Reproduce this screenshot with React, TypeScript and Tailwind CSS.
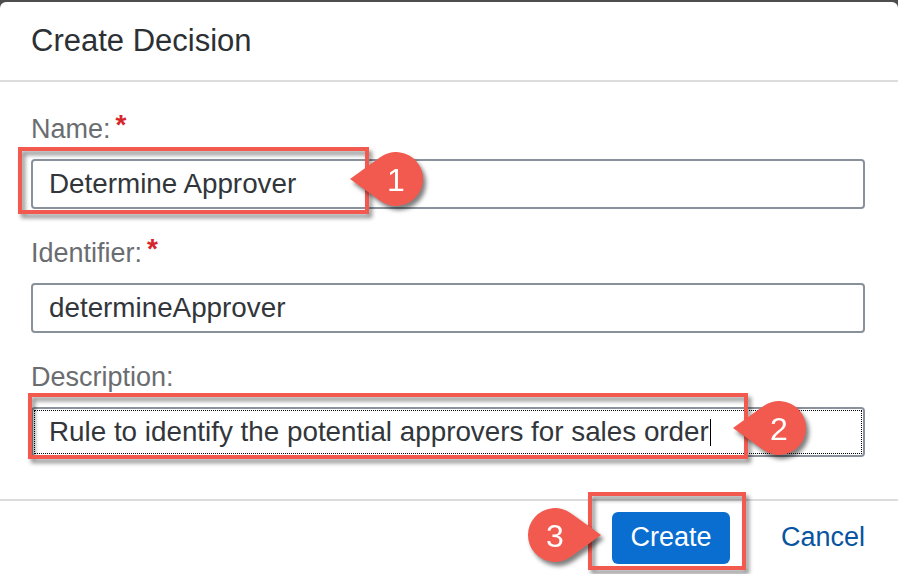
import React from "react";

const FONT = "font-['Liberation_Sans',Arial,sans-serif]";

interface FieldProps {
  label: string;
  required?: boolean;
  children: React.ReactNode;
  last?: boolean;
}

function Field({ label, required, children, last }: FieldProps) {
  return (
    <div className={last ? "" : "mb-[28px]"}>
      <div className="flex h-[32px] items-center text-[27px] text-[#6a6d70]">
        {label}
        {required && <span className="ml-[5px] -mt-[8px] text-[28px] font-bold text-[#d5262c]">*</span>}
      </div>
      <div className="mt-[14px]">{children}</div>
    </div>
  );
}

function TextInput({ value, focused }: { value: string; focused?: boolean }) {
  return (
    <div className="h-[50px] rounded-[4px] border-2 border-[#89919a] bg-white p-[1px]">
      <div
        className={`flex h-full items-center px-[14px] text-[27.8px] text-[#32363a] ${
          focused ? "border border-dotted border-black" : "border border-transparent"
        }`}
      >
        <span className="whitespace-nowrap">{value}</span>
        {focused && <span className="ml-[1px] h-[27px] w-[1.5px] bg-black" />}
      </div>
    </div>
  );
}

// annotation frame drawn over the dialog
function Highlight({ className }: { className: string }) {
  return (
    <div
      className={`absolute border-4 border-[#f25a4f] drop-shadow-[3px_4px_2px_rgba(0,0,0,0.45)] ${className}`}
    />
  );
}

interface CalloutProps {
  n: number;
  className: string;
  flip?: boolean;
}

function Callout({ n, className, flip }: CalloutProps) {
  const cx = flip ? 30 : 50;
  return (
    <svg
      width="80"
      height="70"
      viewBox="0 0 80 70"
      className={`absolute overflow-visible drop-shadow-[3px_4px_2px_rgba(0,0,0,0.5)] ${className}`}
    >
      <g transform={flip ? "translate(80,0) scale(-1,1)" : undefined}>
        <path d="M4 35 L34.1 13.2 A27 27 0 1 1 34.1 56.8 Z" fill="#f25a4f" />
      </g>
      <text
        x={cx}
        y="36"
        textAnchor="middle"
        dominantBaseline="central"
        fill="#fff"
        fontSize="32"
        fontFamily="'Liberation Sans', Arial, sans-serif"
      >
        {n}
      </text>
    </svg>
  );
}

export default function App() {
  return (
    <div className={`relative h-[574px] w-[898px] overflow-hidden bg-[#4d4d4d] pt-[2px] ${FONT}`}>
      <div className="flex h-full flex-col rounded-t-[6px] bg-white">
        {/* Header */}
        <div className="flex h-[80px] items-center border-b-2 border-[#dcdcdc] px-[31px]">
          <h1 className="text-[31px] text-[#2c3034]">Create Decision</h1>
        </div>

        {/* Form */}
        <div className="pl-[31px] pr-[33px] pb-[42px] pt-[31px]">
          <Field label="Name:" required>
            <TextInput value="Determine Approver" />
          </Field>
          <Field label="Identifier:" required>
            <TextInput value="determineApprover" />
          </Field>
          <Field label="Description:" last>
            <TextInput value="Rule to identify the potential approvers for sales order" focused />
          </Field>
        </div>

        {/* Footer */}
        <div className="flex flex-1 items-center justify-end border-t-2 border-[#dcdcdc] pr-[33px]">
          <button className="h-[52px] w-[118px] rounded-[6px] bg-[#0a6ed1] text-[27px] text-white">
            Create
          </button>
          <button className="ml-[51px] text-[27px] text-[#0854a0]">Cancel</button>
        </div>
      </div>

      {/* Annotations */}
      <Highlight className="left-[18px] top-[147px] h-[67px] w-[351px]" />
      <Highlight className="left-[28px] top-[393px] h-[66px] w-[720px]" />
      <Highlight className="left-[588px] top-[492px] h-[78px] w-[158px]" />
      <Callout n={1} className="left-[346px] top-[144px]" />
      <Callout n={2} className="left-[729px] top-[393px]" />
      <Callout n={3} flip className="left-[525px] top-[500px]" />
    </div>
  );
}
